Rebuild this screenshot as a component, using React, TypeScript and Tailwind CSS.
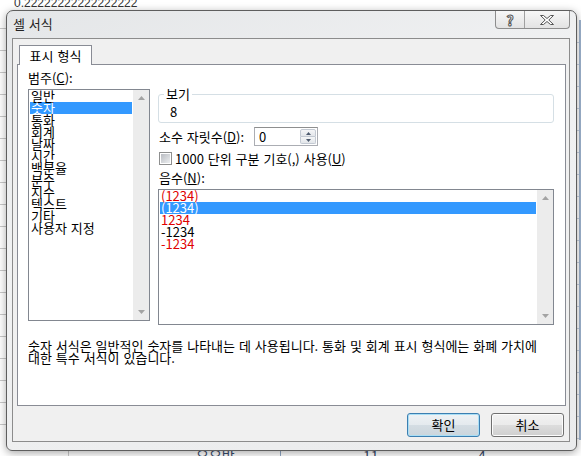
import React from 'react';

const categories = ['일반', '숫자', '통화', '회계', '날짜', '시간', '백분율', '분수', '지수', '텍스트', '기타', '사용자 지정'];

const negatives = [
  { text: '(1234)', red: true, selected: false },
  { text: '(1234)', red: false, selected: true },
  { text: '1234', red: true, selected: false },
  { text: '-1234', red: false, selected: false },
  { text: '-1234', red: true, selected: false },
];

function Arrow({ up }: { up?: boolean }) {
  return (
    <svg width="7" height="4" viewBox="0 0 7 4">
      <polygon points={up ? '0,4 7,4 3.5,0' : '0,0 7,0 3.5,4'} fill="#a3a3a3" />
    </svg>
  );
}

function ScrollBar() {
  return (
    <div className="flex w-[16px] shrink-0 flex-col items-center justify-between bg-[#ececec] py-[6px]">
      <Arrow up />
      <Arrow />
    </div>
  );
}

function Btn({ label, primary }: { label: string; primary?: boolean }) {
  return (
    <div
      className={
        primary
          ? 'flex h-[24px] w-[73px] items-center justify-center rounded-[3px] border border-[#3c7fb1] bg-[linear-gradient(to_bottom,#eef2f5_0%,#e4eaee_50%,#d4dde3_50%,#cbd5dc_100%)] shadow-[inset_0_0_0_1px_#a9def5]'
          : 'flex h-[24px] w-[73px] items-center justify-center rounded-[3px] border border-[#707070] bg-[linear-gradient(to_bottom,#f2f2f2_0%,#ebebeb_50%,#dddddd_50%,#cfcfcf_100%)] shadow-[inset_0_0_0_1px_#fcfcfc]'
      }
    >
      {label}
    </div>
  );
}

export default function App() {
  return (
    <div className="relative h-[456px] w-[581px] overflow-hidden bg-white font-['Noto_Sans_CJK_KR',sans-serif] text-[13px] leading-[12px] text-black [word-spacing:1px]">
      {/* sheet behind the dialog */}
      <div className="absolute left-[14px] top-[-3px] font-['Liberation_Sans',sans-serif] text-[12px] leading-[12px] text-[#333]">
        0.22222222222222222
      </div>
      {[28, 50, 72, 94, 116, 138, 160, 182, 204, 226, 248, 270, 292, 314, 336, 358, 380, 402, 424].map((y) => (
        <div key={y} className="absolute left-0 h-px w-[6px] bg-[#c9c9c9]" style={{ top: y }} />
      ))}
      {[42, 64, 86, 108, 130, 152, 174, 196, 218, 240, 262, 284, 306, 328, 350, 372, 394, 416, 438].map((y) => (
        <div key={y} className="absolute right-0 h-px w-[5px] bg-[#c9d2e0]" style={{ top: y }} />
      ))}
      <div className="absolute right-0 top-[20px] h-[420px] w-[2px] bg-[#9fb4cf]" />
      <div className="absolute left-[68px] top-[448px] h-[8px] w-px bg-[#c9c9c9]" />
      <div className="absolute left-[280px] top-[448px] h-[8px] w-px bg-[#8ea6c4]" />
      <div className="absolute left-[196px] top-[448px] text-[14px] leading-[14px] text-[#3a4b6b]">요요반</div>
      <div className="absolute left-[363px] top-[448px] text-[14px] leading-[14px] text-[#3a4b6b]">11</div>
      <div className="absolute left-[478px] top-[448px] text-[14px] leading-[14px] text-[#3a4b6b]">4</div>

      {/* dialog window */}
      <div className="absolute left-[6px] top-[10px] flex h-[441px] w-[571px] flex-col rounded-t-[7px] rounded-b-[6px] border border-[#5e5e5e] bg-[linear-gradient(160deg,#e4e6e8_0%,#f1f2f3_40%,#eaebec_100%)] shadow-[0_2px_8px_rgba(0,0,0,0.35)]">
        <div className="flex h-[27px] shrink-0 items-start justify-between pl-[6px] pr-[6px]">
          <div className="pt-[7px] text-[#222]">셀 서식</div>
          <div className="flex h-[18px] overflow-hidden rounded-b-[4px] border border-t-0 border-[#8d8d8d] bg-[linear-gradient(to_bottom,#f7f7f7,#e3e3e3)]">
            <div className="flex w-[29px] items-center justify-center border-r border-[#a0a0a0] text-[14px] leading-[14px] font-bold text-white [-webkit-text-stroke:1px_#555]">
              ?
            </div>
            <div className="flex w-[44px] items-center justify-center">
              <svg width="14" height="10" viewBox="0 0 14 10">
                <polygon
                  points="0.5,0.5 3.5,0.5 7,3.5 10.5,0.5 13.5,0.5 8.8,5 13.5,9.5 10.5,9.5 7,6.5 3.5,9.5 0.5,9.5 5.2,5"
                  fill="#fff"
                  stroke="#555"
                  strokeWidth="1"
                />
              </svg>
            </div>
          </div>
        </div>

        {/* client area */}
        <div className="ml-[5px] mr-[6px] flex h-[404px] flex-col border border-[#8c8c8c] bg-[#f0f0f0] pb-[4px] pt-[6px]">
          <div className="ml-[4px] w-[549px]">
            <div className="relative z-10 ml-[2px] -mb-px flex h-[20px] w-[73px] items-center justify-center border border-b-0 border-[#898c95] bg-white">
              표시 형식
            </div>
            <div className="flex h-[342px] flex-col border border-[#898c95] bg-white pl-[10px] pt-[7px]">
              <div className="flex">
                {/* category */}
                <div className="w-[122px]">
                  <div>
                    범주(<span className="underline">C</span>):
                  </div>
                  <div className="mt-[5px] flex h-[232px] border border-[#828790]">
                    <div className="flex-1 px-[1px]">
                      {categories.map((c) => (
                        <div
                          key={c}
                          className={c === '숫자' ? 'h-[12px] whitespace-nowrap bg-[#3399ff] pl-[1px] text-white' : 'h-[12px] whitespace-nowrap pl-[1px]'}
                        >
                          {c}
                        </div>
                      ))}
                    </div>
                    <ScrollBar />
                  </div>
                </div>

                {/* right side */}
                <div className="ml-[8px] w-[396px]">
                  <fieldset className="mt-[16px] rounded-[3px] border border-[#d5dfe5] pb-[4px]">
                    <legend className="ml-[5px] px-[2px]">보기</legend>
                    <div className="mt-[6px] pl-[11px]">8</div>
                  </fieldset>

                  <div className="mt-[4px] flex h-[19px] items-center">
                    <div className="w-[96px] whitespace-nowrap pl-[1px]">
                      소수 자릿수(<span className="underline">D</span>):
                    </div>
                    <div className="flex h-[19px] w-[64px] items-center justify-between border border-[#abadb3] border-t-[#8e8f8f] bg-white pl-[4px] pr-[1px]">
                      <span>0</span>
                      <div className="flex h-[15px] w-[16px] flex-col">
                        <div className="flex flex-1 items-center justify-center rounded-t-[2px] border border-[#c3c9d2] bg-[linear-gradient(to_bottom,#f4f5f7,#e3e6ea)]">
                          <svg width="5" height="3" viewBox="0 0 5 3">
                            <polygon points="0,3 5,3 2.5,0" fill="#4d5a6e" />
                          </svg>
                        </div>
                        <div className="flex flex-1 items-center justify-center rounded-b-[2px] border border-t-0 border-[#c3c9d2] bg-[linear-gradient(to_bottom,#f4f5f7,#e3e6ea)]">
                          <svg width="5" height="3" viewBox="0 0 5 3">
                            <polygon points="0,0 5,0 2.5,3" fill="#4d5a6e" />
                          </svg>
                        </div>
                      </div>
                    </div>
                  </div>

                  <div className="mt-[6px] flex h-[13px] items-center pl-[1px]">
                    <div className="flex h-[13px] w-[13px] shrink-0 items-center justify-center border border-[#8e8f8f] bg-white">
                      <div className="h-[9px] w-[9px] bg-[linear-gradient(135deg,#b9bcc2,#eceef0)]" />
                    </div>
                    <div className="ml-[3px] whitespace-nowrap">
                      1000 단위 구분 기호(,) 사용(<span className="underline">U</span>)
                    </div>
                  </div>

                  <div className="mt-[7px] pl-[1px]">
                    음수(<span className="underline">N</span>):
                  </div>

                  <div className="mt-[5px] flex h-[136px] border border-[#828790]">
                    <div className="flex-1 px-[1px]">
                      {negatives.map((n, i) => (
                        <div
                          key={i}
                          className={
                            n.selected
                              ? 'h-[12px] bg-[#3399ff] pl-[1px] text-white'
                              : n.red
                                ? 'h-[12px] pl-[1px] text-[#e00000]'
                                : 'h-[12px] pl-[1px]'
                          }
                        >
                          {n.text}
                        </div>
                      ))}
                    </div>
                    <ScrollBar />
                  </div>
                </div>
              </div>

              <div className="mt-[15px] w-[530px] whitespace-nowrap">
                숫자 서식은 일반적인 숫자를 나타내는 데 사용됩니다. 통화 및 회계 표시 형식에는 화폐 가치에
                <br />
                대한 특수 서식이 있습니다.
              </div>
            </div>
          </div>

          <div className="mt-[7px] flex justify-end gap-[11px] pr-[5px]">
            <Btn label="확인" primary />
            <Btn label="취소" />
          </div>
        </div>
      </div>
    </div>
  );
}
